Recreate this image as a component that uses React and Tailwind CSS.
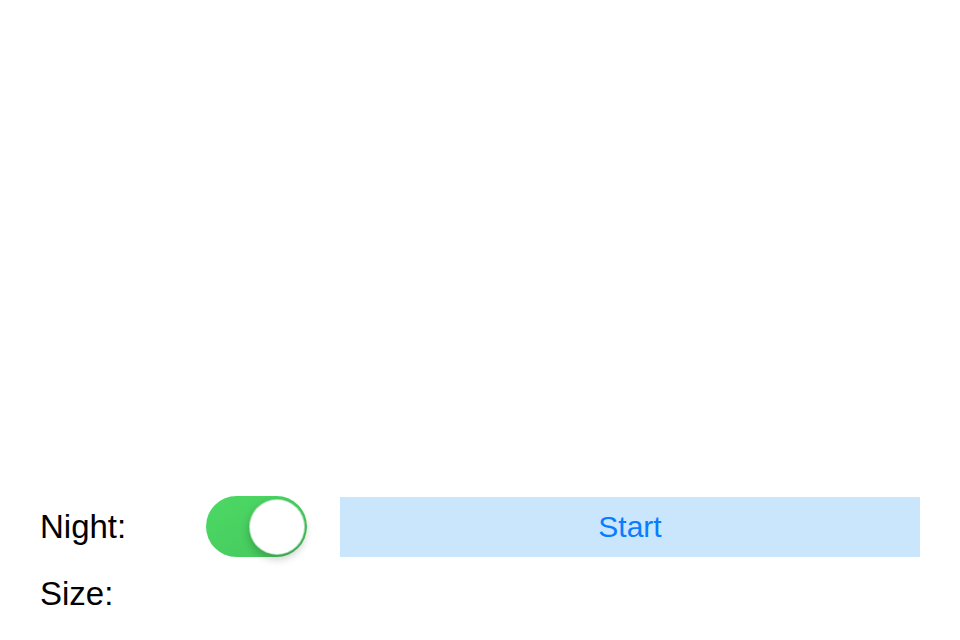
export default function App() {
  return (
    <div className="flex h-[640px] w-[960px] flex-col justify-end bg-white pb-[28px] font-['Liberation_Sans',Arial,sans-serif] text-black">
      <div className="flex h-[61px] items-center px-10">
        <span className="w-[166px] text-[33px] leading-8">Night:</span>
        <button
          aria-label="Night"
          className="relative h-[61px] w-[101px] shrink-0 rounded-full bg-gradient-to-br from-[#4cd964] to-[#45c75c]"
        >
          <span className="absolute right-[2px] top-[2.5px] h-[56px] w-[56px] rounded-full border border-[#3fae53]/40 bg-white shadow-[0_4px_8px_rgba(0,0,0,0.22)]" />
        </button>
        <button className="ml-[33px] flex h-[60px] flex-1 items-center justify-center bg-[#c9e6fd] text-[30px] leading-8 text-[#0a7dff]">
          Start
        </button>
      </div>
      <div className="mt-[21px] px-10">
        <span className="text-[33px] leading-8">Size:</span>
      </div>
    </div>
  );
}
